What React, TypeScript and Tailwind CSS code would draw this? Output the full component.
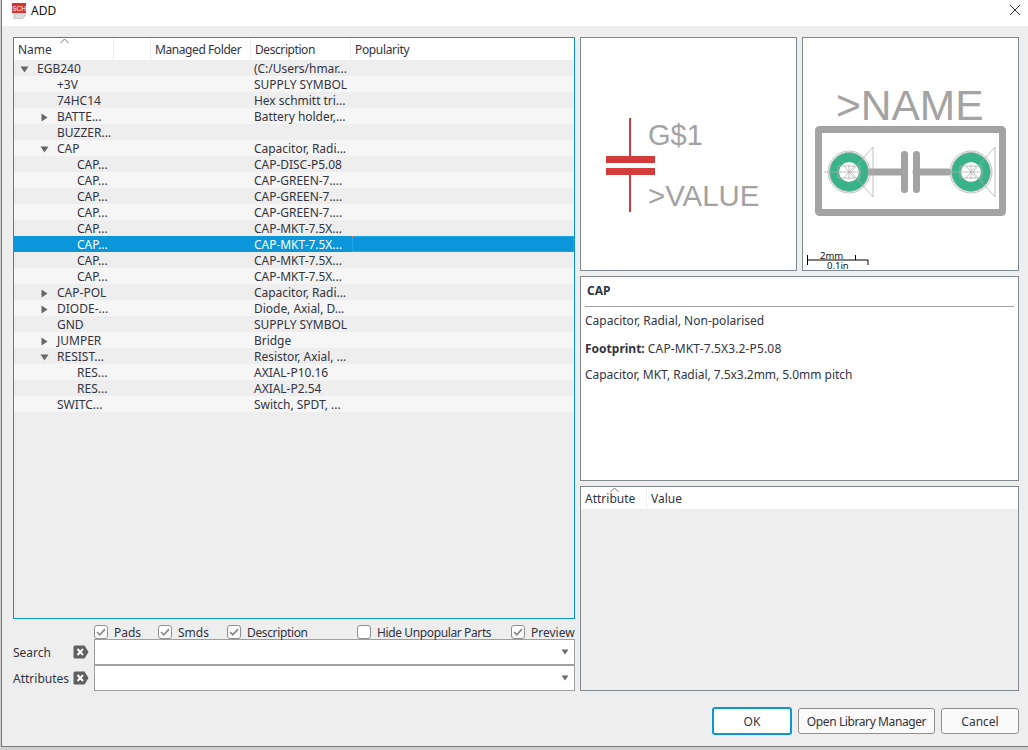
import type { ReactNode } from "react"

type Row = { name: string; desc: string; level: 0 | 1 | 2; arrow?: "down" | "right"; selected?: boolean }

const rows: Row[] = [
  { name: "EGB240", desc: "(C:/Users/hmar...", level: 0, arrow: "down" },
  { name: "+3V", desc: "SUPPLY SYMBOL", level: 1 },
  { name: "74HC14", desc: "Hex schmitt tri...", level: 1 },
  { name: "BATTE...", desc: "Battery holder,...", level: 1, arrow: "right" },
  { name: "BUZZER...", desc: "", level: 1 },
  { name: "CAP", desc: "Capacitor, Radi...", level: 1, arrow: "down" },
  { name: "CAP...", desc: "CAP-DISC-P5.08", level: 2 },
  { name: "CAP...", desc: "CAP-GREEN-7....", level: 2 },
  { name: "CAP...", desc: "CAP-GREEN-7....", level: 2 },
  { name: "CAP...", desc: "CAP-GREEN-7....", level: 2 },
  { name: "CAP...", desc: "CAP-MKT-7.5X...", level: 2 },
  { name: "CAP...", desc: "CAP-MKT-7.5X...", level: 2, selected: true },
  { name: "CAP...", desc: "CAP-MKT-7.5X...", level: 2 },
  { name: "CAP...", desc: "CAP-MKT-7.5X...", level: 2 },
  { name: "CAP-POL", desc: "Capacitor, Radi...", level: 1, arrow: "right" },
  { name: "DIODE-...", desc: "Diode, Axial, D...", level: 1, arrow: "right" },
  { name: "GND", desc: "SUPPLY SYMBOL", level: 1 },
  { name: "JUMPER", desc: "Bridge", level: 1, arrow: "right" },
  { name: "RESIST...", desc: "Resistor, Axial, ...", level: 1, arrow: "down" },
  { name: "RES...", desc: "AXIAL-P10.16", level: 2 },
  { name: "RES...", desc: "AXIAL-P2.54", level: 2 },
  { name: "SWITC...", desc: "Switch, SPDT, ...", level: 1 },
]

const indent = ["pl-0", "pl-[20px]", "pl-[40px]"]

function Arrow({ dir }: { dir: "down" | "right" }) {
  return (
    <svg width="9" height="9" viewBox="0 0 9 9">
      {dir === "down" ? <path d="M0.5 1.5h8l-4 6z" fill="#666" /> : <path d="M1.5 0.5v8l6-4z" fill="#666" />}
    </svg>
  )
}

function Chevron({ className }: { className: string }) {
  return (
    <svg className={`absolute top-0 ${className}`} width="9" height="6" viewBox="0 0 9 6">
      <path d="M0.5 5L4.5 1l4 4" fill="none" stroke="#777" />
    </svg>
  )
}

function TreeRow({ row, index }: { row: Row; index: number }) {
  const bg = row.selected ? "bg-[#0a96d8] text-white" : index % 2 ? "bg-[#f6f6f6]" : "bg-[#eeeeee]"
  return (
    <div className={`grid grid-cols-[100px_37px_100px_100px_1fr] h-4 items-center ${bg}`}>
      <div className={`flex items-center ${indent[row.level]}`}>
        <span className="w-5 mr-[3px] flex justify-center translate-y-px">{row.arrow && <Arrow dir={row.arrow} />}</span>
        <span className="translate-y-px">{row.name}</span>
      </div>
      <div />
      <div />
      <div className="pl-[3px] whitespace-nowrap translate-y-px tracking-[-0.03px]">{row.desc}</div>
      <div className={`h-full ml-px ${row.selected ? "border border-dotted border-[#f07a30]" : ""}`} />
    </div>
  )
}

function Check({ on, className, label, textClass }: { on?: boolean; className: string; label: string; textClass?: string }) {
  return (
    <div className={`flex items-center h-[14px] ${className}`}>
      <span className="w-[14px] h-[14px] rounded-[3px] border border-[#8f8f8f] bg-white flex items-center justify-center">
        {on && (
          <svg width="10" height="8" viewBox="0 0 10 8">
            <path d="M1 4l2.8 2.8L9 1.2" fill="none" stroke="#888888" strokeWidth="1.7" />
          </svg>
        )}
      </span>
      <span className={`ml-[6px] whitespace-nowrap translate-y-px ${textClass ?? ""}`}>{label}</span>
    </div>
  )
}

function ClearIcon() {
  return (
    <svg width="16" height="14" viewBox="0 0 16 14">
      <path d="M2 0.5h9.5l4 6.5-4 6.5H2a1.5 1.5 0 0 1-1.5-1.5V2A1.5 1.5 0 0 1 2 0.5z" fill="#5f5f5f" />
      <path d="M4.5 4l5.5 6M10 4l-5.5 6" stroke="#fff" strokeWidth="2" />
    </svg>
  )
}

function Combo() {
  return (
    <div className="flex-1 h-[26px] bg-white border border-[#a0a0a0] flex items-center justify-end pr-[5px]">
      <svg width="8" height="6" viewBox="0 0 8 6">
        <path d="M0.5 0.5h7L4 5.5z" fill="#6b6b6b" />
      </svg>
    </div>
  )
}

function Panel({ className, children }: { className: string; children?: ReactNode }) {
  return <div className={`border border-[#828890] ${className}`}>{children}</div>
}

function Pad({ cx }: { cx: number }) {
  const cy = 172
  return (
    <g>
      <circle cx={cx} cy={cy} r="14.7" fill="none" stroke="#2fb88a" strokeWidth="9.4" />
      <circle cx={cx} cy={cy} r="14.7" fill="none" stroke="url(#hatch)" strokeWidth="9.4" />
      <g fill="none" stroke="#b0b0b0" strokeWidth="0.8">
        <circle cx={cx} cy={cy} r="21" />
        <circle cx={cx} cy={cy} r="19.5" />
        <path d={`M${cx - 25} ${cy}H${cx + 12}M${cx - 11} ${cy - 6}h22v12h-22zM${cx + 24} ${cy - 25}v50L${cx + 2} ${cy}z`} />
        <path d={`M${cx - 5} ${cy - 6}l10 12M${cx + 5} ${cy - 6}l-10 12M${cx} ${cy - 7}v14`} />
      </g>
    </g>
  )
}

function SymbolPreview() {
  return (
    <svg className="block w-full h-full" viewBox="581 38 215 232">
      <path d="M630 118v38M630 175v37" stroke="#d43c3c" strokeWidth="2" />
      <path d="M606 156h49v7h-49zM606 168h49v7h-49z" fill="#d43c3c" />
      <text x="648" y="145" fontFamily="Liberation Sans" fontSize="29" fill="#a3a3a3">G$1</text>
      <text x="648" y="206" fontFamily="Liberation Sans" fontSize="29.4" fill="#a3a3a3">&gt;VALUE</text>
    </svg>
  )
}

function FootprintPreview() {
  return (
    <svg className="block w-full h-full" viewBox="803 38 215 232">
      <defs>
        <pattern id="hatch" width="5" height="5" patternUnits="userSpaceOnUse" patternTransform="rotate(45)">
          <path d="M0 0h5M0 0v5" stroke="#5f9c85" strokeWidth="1" />
        </pattern>
      </defs>
      <text x="836" y="120" fontFamily="Liberation Sans" fontSize="42.5" fill="#a3a3a3">&gt;NAME</text>
      <rect x="818.5" y="129.5" width="184" height="83" rx="1" fill="none" stroke="#a3a3a3" strokeWidth="7" />
      <path d="M870 172h34M916 172h32" stroke="#a3a3a3" strokeWidth="7" strokeLinecap="round" />
      <path d="M904.5 154.5v35M916.5 154.5v35" stroke="#a3a3a3" strokeWidth="7" strokeLinecap="round" />
      <Pad cx={849} />
      <Pad cx={971} />
      <path d="M807.5 255v10M807.5 260H868M855.5 255v5M868 260v5" stroke="#000" fill="none" />
      <text x="820" y="259" fontFamily="Noto Sans" fontSize="9.5" fill="#111">2mm</text>
      <text x="827" y="268.5" fontFamily="Noto Sans" fontSize="9.5" fill="#111">0.1in</text>
    </svg>
  )
}

export default function App() {
  return (
    <div className="w-[1028px] h-[750px] overflow-hidden bg-[#cfcfcf] pl-px font-['Noto_Sans',sans-serif] text-[12px] leading-4 text-[#33343f]">
      <div className="h-[747px] flex flex-col border-l border-b border-[#777777] bg-[#eeeeee]">
        <div className="h-[26px] shrink-0 bg-white flex items-start pl-[10px] pr-[7px] pt-[2px]">
          <svg className="mt-px" width="14" height="16" viewBox="0 0 14 16">
            <path d="M2 9h11v4l-3 3H2z" fill="#dcdcdc" stroke="#999" strokeWidth="0.5" />
            <rect x="0" y="0" width="14" height="10" fill="#d83030" />
            <text x="7" y="7.5" textAnchor="middle" fontFamily="Liberation Sans" fontSize="6.5" fill="#fff">SCH</text>
          </svg>
          <span className="ml-[5px] text-[#111] translate-y-px">ADD</span>
          <svg className="ml-auto mt-[2px]" width="12" height="12" viewBox="0 0 12 12">
            <path d="M1 1l10 10M11 1L1 11" stroke="#333" strokeWidth="1" />
          </svg>
        </div>

        <div className="flex pl-[11px] pt-[11px] gap-[5px]">
          <div className="w-[562px] flex flex-col">
            <div className="h-[582px] border border-[#0a96d8] bg-[#eeeeee]">
              <div className="relative grid grid-cols-[100px_37px_100px_100px_1fr] h-[22px] bg-white items-center">
                <Chevron className="left-[46px]" />
                <div className="pl-[4px] h-full flex items-center border-r border-[#eeeeee]"><span className="translate-y-px">Name</span></div>
                <div className="h-full border-r border-[#eeeeee]" />
                <div className="pl-[4px] h-full flex items-center border-r border-[#eeeeee]"><span className="translate-y-px tracking-[-0.42px]">Managed Folder</span></div>
                <div className="pl-[4px] h-full flex items-center border-r border-[#eeeeee]"><span className="translate-y-px tracking-[-0.42px]">Description</span></div>
                <div className="pl-[4px] h-full flex items-center"><span className="translate-y-px tracking-[-0.35px]">Popularity</span></div>
              </div>
              {rows.map((row, i) => (
                <TreeRow key={i} row={row} index={i} />
              ))}
            </div>
            <div className="flex mt-[6px] pl-[81px] h-[14px]">
              <Check on label="Pads" className="w-[64px]" />
              <Check on label="Smds" className="w-[69px]" />
              <Check on label="Description" className="w-[130px]" textClass="tracking-[-0.36px]" />
              <Check label="Hide Unpopular Parts" className="w-[154px]" textClass="tracking-[-0.38px]" />
              <Check on label="Preview" className="" />
            </div>
            <div className="flex items-center h-[26px]">
              <span className="w-[60px] translate-y-px">Search</span>
              <span className="w-[21px] flex"><ClearIcon /></span>
              <Combo />
            </div>
            <div className="flex items-center h-[26px]">
              <span className="w-[60px] translate-y-px">Attributes</span>
              <span className="w-[21px] flex"><ClearIcon /></span>
              <Combo />
            </div>
          </div>

          <div className="w-[439px] flex flex-col gap-[5px]">
            <div className="flex gap-[5px] h-[234px]">
              <Panel className="w-[217px] bg-white"><SymbolPreview /></Panel>
              <Panel className="w-[217px] bg-white"><FootprintPreview /></Panel>
            </div>
            <Panel className="h-[205px] bg-white px-[4px] pt-[5px]">
              <div className="font-bold pl-[2px] h-[17px] flex items-center text-[#33343f]">CAP</div>
              <div className="mt-[7px] h-px bg-[#a0a0a0]" />
              <p className="mt-[6px]">Capacitor, Radial, Non-polarised</p>
              <p className="mt-3"><b>Footprint:</b> <span className="tracking-[0.14px]">CAP-MKT-7.5X3.2-P5.08</span></p>
              <p className="mt-[10px] tracking-[-0.04px]">Capacitor, MKT, Radial, 7.5x3.2mm, 5.0mm pitch</p>
            </Panel>
            <Panel className="h-[205px] bg-[#eeeeee]">
              <div className="relative flex h-[22px] bg-white items-center">
                <Chevron className="left-[29px]" />
                <div className="w-[66px] pl-[4px] h-full flex items-center border-r border-[#eeeeee]"><span className="translate-y-px">Attribute</span></div>
                <div className="pl-[4px] translate-y-px">Value</div>
              </div>
            </Panel>
            <div className="flex items-center justify-end gap-[6px] h-[28px] mt-[11px]">
              <button className="w-[80px] h-[28px] rounded-[3px] border-2 border-[#0a96d8] bg-white"><span className="inline-block translate-y-px">OK</span></button>
              <button className="w-[137px] h-[26px] rounded-[3px] border border-[#8f8f8f] bg-[#fafafa]"><span className="inline-block translate-y-px tracking-[-0.4px]">Open Library Manager</span></button>
              <button className="w-[78px] h-[26px] rounded-[3px] border border-[#8f8f8f] bg-[#fafafa]"><span className="inline-block translate-y-px">Cancel</span></button>
            </div>
          </div>
        </div>
      </div>
    </div>
  )
}
